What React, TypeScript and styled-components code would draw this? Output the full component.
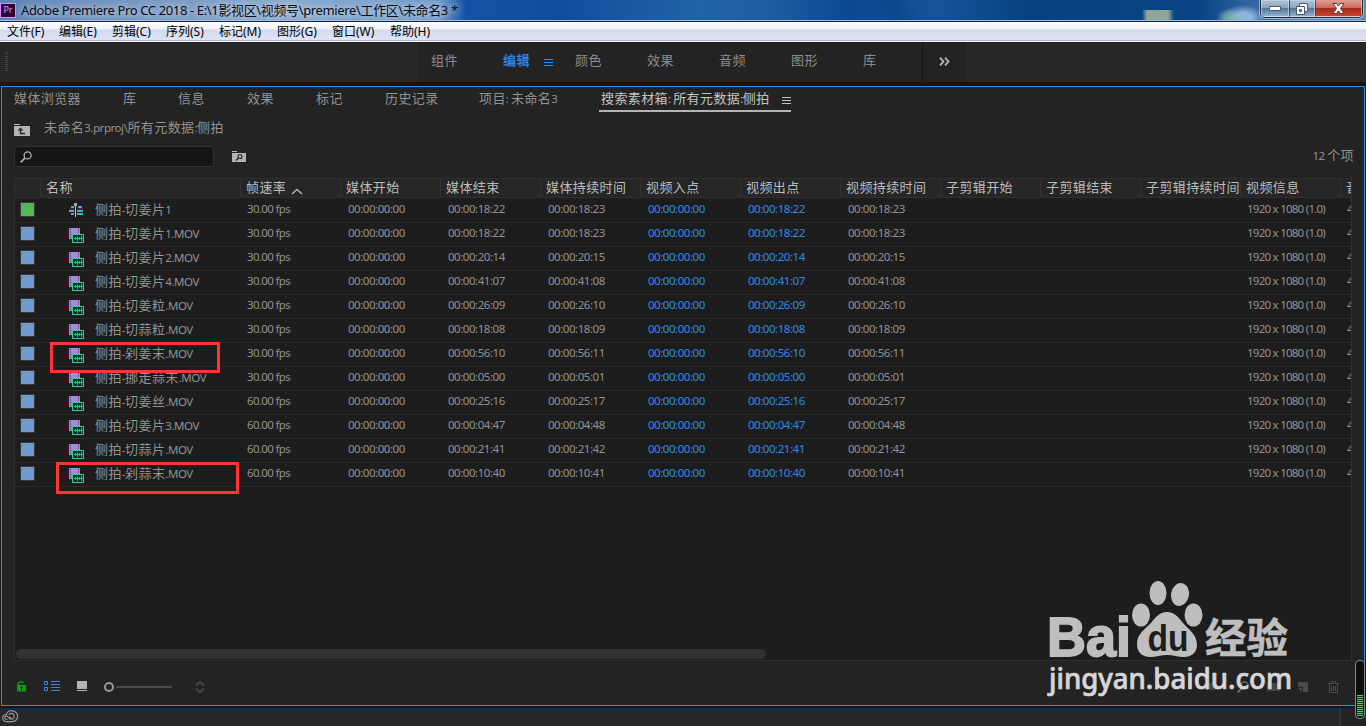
import React from "react";
import styled, { createGlobalStyle } from "styled-components";

const LATIN = `"Noto Sans", "Open Sans"`;
const CJK = `"Noto Sans CJK SC", sans-serif`;

const GlobalStyle = createGlobalStyle`
  * { box-sizing: border-box; }
  body {
    margin: 0;
    background: #161616;
    color: #929292;
    font: 13px/16px ${LATIN}, ${CJK};
    overflow: hidden;
  }
  svg { display: block; }
`;

const Frame = styled.div`
  position: relative;
  width: 1366px;
  height: 726px;
  display: flex;
  flex-direction: column;
  background: #161616;
  overflow: hidden;
`;

/* ---------- mixed script text ---------- */

const Han = styled.span`
  font: 13px/16px ${CJK};
  letter-spacing: 0.4px;
`;

const Roman = styled.span`
  font: 11.5px/16px ${LATIN}, sans-serif;
  letter-spacing: -0.45px;
`;

function Mixed({ children }: { children: string }) {
  const runs = children.match(/[\u4e00-\u9fff]+|[^\u4e00-\u9fff]+/g) ?? [];
  return (
    <>
      {runs.map((run, i) =>
        /[\u4e00-\u9fff]/.test(run) ? <Han key={i}>{run}</Han> : <Roman key={i}>{run}</Roman>
      )}
    </>
  );
}

/* ---------- window title ---------- */

const TitleBar = styled.header`
  flex: none;
  display: flex;
  height: 22px;
  overflow: hidden;
  border-bottom: 1px solid #14264a;
  box-shadow: inset 0 -1px 0 #9fbbe0;
  background:
    linear-gradient(90deg, transparent 1142px, rgba(190, 200, 165, 0.75) 1147px 1168px, transparent 1174px) 0 10px no-repeat,
    radial-gradient(ellipse 12px 10px at 1228px 18px, rgba(120, 180, 170, 0.7) 30%, transparent),
    radial-gradient(ellipse 22px 13px at 1243px 18px, rgba(160, 195, 230, 0.85) 40%, transparent),
    linear-gradient(60deg, transparent 760px, rgba(6, 60, 125, 0.35) 780px, transparent 800px),
    linear-gradient(90deg, #5b83b8 0, #7393c0 100px, #87a9cf 300px, #6f98c8 440px, #1253a3 466px, #0e4f9d 560px, #2064a8 700px, #1d5fa5 760px, #0b4a92 850px, #15539b 940px, #07417f 1030px, #0a4484 1200px, #4d7fb5 1290px, #5d89bb 1366px);
`;

const AppBadge = styled.div`
  flex: none;
  margin-top: 3px;
  width: 16px;
  height: 15px;
  border: 1px solid #d58bff;
  background: #2a0634;
  color: #dd9bff;
  font: 9px/12px ${LATIN}, sans-serif;
  text-align: center;
`;

const TitleText = styled.div`
  margin-left: 5px;
  color: #0a0a12;
  font: 13px/20px ${LATIN}, ${CJK};
  letter-spacing: -0.36px;
  white-space: nowrap;
  text-shadow: 0 0 6px rgba(255, 255, 255, 0.65), 0 0 10px rgba(255, 255, 255, 0.5);
`;

const WindowButtons = styled.div`
  display: flex;
  margin: -1px 3px 0 auto;
  height: 19px;
  border: 1px solid #1c2b40;
  border-radius: 0 0 5px 5px;
  overflow: hidden;
  box-shadow: 0 0 0 1px rgba(220, 235, 250, 0.55);
`;

const WindowButton = styled.div<{ $width: number; $close?: boolean }>`
  display: flex;
  align-items: center;
  justify-content: center;
  width: ${(p) => p.$width}px;
  border: 1px solid rgba(255, 255, 255, 0.45);
  background: ${(p) =>
    p.$close
      ? "linear-gradient(#d99a90 0, #c9695b 45%, #ab2a16 50%, #c5452f 100%)"
      : "linear-gradient(#a9bfd6 0, #8aa5c2 45%, #57779a 50%, #8fb0ca 100%)"};
  & + & { border-left-color: #33455c; }
`;

/* ---------- menu ---------- */

const MenuBar = styled.nav`
  flex: none;
  display: grid;
  grid-template-columns: 52px 53px 54px 53px 58px 55px 58px 60px;
  height: 20px;
  padding-left: 7px;
  border-bottom: 1px solid #f2f3f8;
  box-shadow: inset 0 -1px 0 #b4bace;
  background: linear-gradient(#ffffff 0, #eef1f8 7px, #d3daec 8px, #e0e5f4 19px);
  color: #000;
  font: 12px/19px ${LATIN}, ${CJK};
  white-space: nowrap;
`;

/* ---------- workspace bar ---------- */

const WorkspaceBar = styled.div`
  flex: none;
  display: flex;
  height: 40px;
  background: #272727;
`;

const Grip = styled.div`
  width: 3px;
  height: 19px;
  margin: 10px 0 0 5px;
  background: repeating-linear-gradient(#444 0 1px, transparent 1px 2px);
`;

const Workspaces = styled.div`
  display: grid;
  grid-template-columns: repeat(7, 72px);
  width: 505px;
  margin-left: 410px;
  padding: 10px 0 0 13px;
  border-right: 1px solid #151515;
  background: #232323;
`;

const Workspace = styled.div<{ $active?: boolean }>`
  display: flex;
  gap: 14px;
  color: ${(p) => (p.$active ? "#2d8ceb" : "#8c8c8c")};
  -webkit-text-stroke: ${(p) => (p.$active ? "0.3px" : "0")};
`;

const Burger = styled.span<{ $top: number }>`
  width: 9px;
  height: 7px;
  margin-top: ${(p) => p.$top}px;
  background: repeating-linear-gradient(currentColor 0 1px, transparent 1px 3px);
`;

const More = styled.div`
  padding: 15px 16px 0;
  background: #232323;
`;

/* ---------- panel ---------- */

const Panel = styled.main`
  flex: none;
  height: 620px;
  margin: 4px 1px 2px;
  display: flex;
  flex-direction: column;
  border: 1px solid #2d8ceb;
  background: #232323;
`;

const Tabs = styled.div`
  display: grid;
  grid-template-columns: 109px 55px 69px 69px 69px 94px 120px 192px;
  height: 25px;
  padding: 3px 0 0 12px;
  white-space: nowrap;
`;

const Tab = styled.div<{ $active?: boolean }>`
  display: flex;
  height: 22px;
  ${(p) => p.$active && "padding-left: 2px; color: #c4c4c4; border-bottom: 2px solid #b4b4b4; letter-spacing: 0.5px;"}
`;

const TabText = styled.div`
  flex: 1;
  white-space: pre;
`;

const PathRow = styled.div`
  display: flex;
  height: 34px;
  padding: 7px 0 0 12px;
`;

const PathIcon = styled.svg`
  margin-top: 5px;
`;

const PathText = styled.div`
  margin-left: 14px;
`;

const SearchRow = styled.div`
  display: flex;
  align-items: center;
  height: 21px;
  padding: 0 10px 0 12px;
`;

const SearchBox = styled.div`
  width: 200px;
  height: 21px;
  margin-right: 18px;
  padding: 4px 5px;
  border: 1px solid #313131;
  border-radius: 3px;
  background: #151515;
`;

const Count = styled.div`
  margin: 0 0 3px auto;
`;

/* ---------- table ---------- */

const Table = styled.section`
  display: flex;
  flex-direction: column;
  width: 1338px;
  height: 483px;
  margin: 11px 0 0 12px;
  border: 1px solid #2f2f2f;
  background: #1d1d1d;
  overflow: hidden;
`;

const columns = "26px 200px repeat(11, 100px) 11px";

const HeadRow = styled.div`
  flex: none;
  display: grid;
  grid-template-columns: ${columns};
  height: 19px;
  margin-bottom: 1px;
  border-bottom: 1px solid #2f2f2f;
  background: #262626;
`;

const HeadCell = styled.div`
  display: flex;
  min-width: 0;
  padding-left: 5px;
  border-right: 1px solid #323232;
  color: #bcbcbc;
  white-space: nowrap;
  &:last-child { border: 0; }
`;

const SortMark = styled.svg`
  margin: 9px 0 0 5px;
`;

const Row = styled.div`
  flex: none;
  display: grid;
  grid-template-columns: ${columns};
  height: 24px;
  border-bottom: 1px solid #2b2b2b;
  white-space: nowrap;
`;

const Swatch = styled.div<{ $color: string }>`
  width: 15px;
  height: 15px;
  margin: 3px 0 0 5px;
  border: 1px solid #373737;
  background: ${(p) => p.$color};
`;

const NameCell = styled.div`
  display: flex;
  padding: 2px 0 0 27px;
`;

const ClipIcon = styled.svg`
  margin: 2px 11px 0 1px;
`;

const DataCell = styled.div<{ $link?: boolean; $spacing?: number }>`
  padding: 2px 0 0 ${(p) => (p.$spacing ? 6 : 7)}px;
  color: ${(p) => (p.$link ? "#2d8ceb" : "#939393")};
  font: 11.5px/16px ${LATIN}, sans-serif;
  letter-spacing: ${(p) => p.$spacing ?? -0.46}px;
  min-width: 0;
`;

const ScrollThumb = styled.div`
  flex: none;
  width: 750px;
  height: 10px;
  margin: auto 0 1px 1px;
  border-radius: 5px;
  background: #313131;
`;

/* ---------- footer ---------- */

const Footer = styled.div`
  display: flex;
  align-items: center;
  height: 44px;
  padding: 7px 25px 0 14px;
`;

const ListGlyph = styled.svg`
  margin-left: 18px;
`;

const ThumbGlyph = styled.svg`
  margin-left: 16px;
`;

const SortGlyph = styled.svg`
  margin-left: 23px;
`;

const FooterRight = styled.div`
  display: flex;
  align-items: center;
  gap: 18px;
  margin-left: auto;
`;

const StatusBar = styled.footer`
  flex: none;
  display: flex;
  justify-content: space-between;
  height: 18px;
  background: #272727;
  padding: 2px 0 0 2px;
`;

const StatusEnd = styled.div`
  width: 27px;
  margin-top: -2px;
  border-left: 2px solid #323232;
  background: #232323;
`;

/* ---------- overlays ---------- */

const Highlight = styled.div<{ $x: number; $y: number; $w: number; $h: number }>`
  position: absolute;
  left: ${(p) => p.$x}px;
  top: ${(p) => p.$y}px;
  width: ${(p) => p.$w}px;
  height: ${(p) => p.$h}px;
  border: 3px solid #ff3434;
`;

const Watermark = styled.svg`
  position: absolute;
  left: 1040px;
  top: 575px;
`;

const Meter = styled.div`
  position: absolute;
  left: 1355px;
  top: 660px;
  width: 10px;
  height: 59px;
  padding: 34px 1px 2px;
  border: 1px solid #8a8a8a;
  border-radius: 4px;
  background: #0c0d0f;
`;

const MeterBars = styled.div`
  height: 21px;
  background: repeating-linear-gradient(#45d56b 0 1px, #12331b 1px 2px);
`;

/* ---------- icons ---------- */

const SequenceIcon = () => (
  <ClipIcon width="15" height="15" viewBox="0 0 15 15">
    <path d="M2 4h3M0 8h5M9 4h4M8 8h6" stroke="#6f97d0" strokeWidth="2" />
    <path d="M1 6h4M9 6h5" stroke="#3a4b63" />
    <path d="M2 11h3M8 11h6" stroke="#27c98f" strokeWidth="2" />
    <path d="M6.500 1v13" stroke="#c5c5c5" />
    <path d="M5 0h3v3H5z" fill="#aaa" />
  </ClipIcon>
);

const MovieIcon = () => (
  <ClipIcon width="15" height="16" viewBox="0 0 15 16">
    <path d="M0 1h11v11H0z" fill="#a78be0" />
    <path d="M1.500 2v10M9.500 2v5" stroke="#241d33" strokeDasharray="1 1.500" />
    <path d="M3.500 7.500h11v8h-11z" fill="#122b22" stroke="#29d998" />
    <path d="M5 11.500h9M6.500 10v3M8.500 9v5M10.500 10v3M12.500 9v5" stroke="#29d998" strokeWidth="0.8" />
  </ClipIcon>
);

const FolderUpIcon = () => (
  <PathIcon width="16" height="12" viewBox="0 0 16 12">
    <path d="M0 0h6v1H0zM0 2h16v10H0z" fill="#b4b4b4" />
    <path d="M11 9.500H6.500V5M4.500 6.500l2-2 2 2" fill="none" stroke="#232323" strokeWidth="1.300" />
  </PathIcon>
);

const FolderSearchIcon = () => (
  <svg width="14" height="12" viewBox="0 0 14 12">
    <path d="M0 0h5v1H0zM0 2h14v9H0z" fill="#b4b4b4" />
    <circle cx="8" cy="5.500" r="2" fill="none" stroke="#232323" strokeWidth="1.200" />
    <path d="M6.500 7L4 9.500" stroke="#232323" strokeWidth="1.200" />
  </svg>
);

const Magnifier = ({ color = "#b4b4b4" }: { color?: string }) => (
  <svg width="12" height="12" viewBox="0 0 12 12">
    <circle cx="7.600" cy="4.400" r="3.500" fill="none" stroke={color} strokeWidth="1.300" />
    <path d="M5 7L0.700 11.300" stroke={color} strokeWidth="1.700" />
  </svg>
);

const LockIcon = () => (
  <svg width="10" height="11" viewBox="0 0 10 11">
    <path d="M2 4V2.700L3.700 1h2.600L7.500 2" fill="none" stroke="#139c13" strokeWidth="1.400" />
    <path d="M1 4h9v6.500H1z" fill="#139c13" />
    <path d="M5.500 5.500v4M4.500 6.500h2" stroke="#163016" strokeWidth="1.200" />
  </svg>
);

const ListIcon = () => (
  <ListGlyph width="17" height="11" viewBox="0 0 17 11">
    <path d="M.5.500h3v3h-3zM.5 6.500h3v3h-3zM7 .5h9M7 3.500h9M7 6.500h9M7 9.500h9" fill="none" stroke="#2d8ceb" />
  </ListGlyph>
);

const ThumbIcon = () => (
  <ThumbGlyph width="11" height="11" viewBox="0 0 11 11">
    <path d="M0 0h10v8H0zM0 9h10v1H0z" fill="#b4b4b4" />
  </ThumbGlyph>
);

const ZoomSlider = () => (
  <ThumbGlyph width="68" height="12" viewBox="0 0 68 12">
    <path d="M12 6h56" stroke="#4b4b4b" strokeWidth="2" />
    <circle cx="5" cy="6" r="4" fill="none" stroke="#999" strokeWidth="2" />
  </ThumbGlyph>
);

const SortIcon = () => (
  <SortGlyph width="10" height="12" viewBox="0 0 10 12">
    <path d="M.8 4.500L5 .8l4.200 3.700M.8 7.500L5 11.200l4.200-3.700" fill="none" stroke="#555" strokeWidth="1.300" />
  </SortGlyph>
);

const CloudIcon = () => (
  <svg width="17" height="13" viewBox="0 0 17 13">
    <path
      d="M4.300 11.700A3.700 3.700 0 0 1 4.500 4.300 5 5 0 0 1 10.400.8a5.400 5.400 0 0 1-.4 10.900z"
      fill="none" stroke="#9a9a9a" strokeWidth="1.200"
    />
    <path
      d="M8.500 9.600L5.800 6.700a1.700 1.700 0 1 0-1.300 2.800h1M6.700 4.700a3 3 0 1 1 3.300 4.600L7.500 6.600"
      fill="none" stroke="#9a9a9a" strokeWidth="1.100"
    />
  </svg>
);

const TrashIcon = () => (
  <svg width="11" height="12" viewBox="0 0 11 12">
    <path d="M0 2.500h11M3.500 2.500v-2h4v2M1.500 3v8.500h8V3M3.500 5v5M5.500 5v5M7.500 5v5" fill="none" stroke="#4b4b4b" />
  </svg>
);

/* ---------- data ---------- */

const menus = ["文件(F)", "编辑(E)", "剪辑(C)", "序列(S)", "标记(M)", "图形(G)", "窗口(W)", "帮助(H)"];
const workspaces = ["组件", "编辑", "颜色", "效果", "音频", "图形", "库"];
const tabs = ["媒体浏览器", "库", "信息", "效果", "标记", "历史记录", "项目: 未命名3"];
const heads = [
  "", "名称", "帧速率", "媒体开始", "媒体结束", "媒体持续时间", "视频入点", "视频出点",
  "视频持续时间", "子剪辑开始", "子剪辑结束", "子剪辑持续时间", "视频信息", "音",
];
const ZERO = "00:00:00:00";
const clips: [string, string, string, string][] = [
  ["侧拍-切姜片1", "30.00", "00:00:18:22", "00:00:18:23"],
  ["侧拍-切姜片1.MOV", "30.00", "00:00:18:22", "00:00:18:23"],
  ["侧拍-切姜片2.MOV", "30.00", "00:00:20:14", "00:00:20:15"],
  ["侧拍-切姜片4.MOV", "30.00", "00:00:41:07", "00:00:41:08"],
  ["侧拍-切姜粒.MOV", "30.00", "00:00:26:09", "00:00:26:10"],
  ["侧拍-切蒜粒.MOV", "30.00", "00:00:18:08", "00:00:18:09"],
  ["侧拍-剁姜末.MOV", "30.00", "00:00:56:10", "00:00:56:11"],
  ["侧拍-挪走蒜末.MOV", "30.00", "00:00:05:00", "00:00:05:01"],
  ["侧拍-切姜丝.MOV", "60.00", "00:00:25:16", "00:00:25:17"],
  ["侧拍-切姜片3.MOV", "60.00", "00:00:04:47", "00:00:04:48"],
  ["侧拍-切蒜片.MOV", "60.00", "00:00:21:41", "00:00:21:42"],
  ["侧拍-剁蒜末.MOV", "60.00", "00:00:10:40", "00:00:10:41"],
];

export default function App() {
  return (
    <Frame>
      <GlobalStyle />
      <TitleBar>
        <AppBadge>Pr</AppBadge>
        <TitleText>Adobe Premiere Pro CC 2018 - E:\1影视区\视频号\premiere\工作区\未命名3 *</TitleText>
        <WindowButtons>
          <WindowButton $width={28}>
            <svg width="12" height="5" viewBox="0 0 12 5"><path d="M.5.500h11v4H.5z" fill="#fff" stroke="#4b5a6e" /></svg>
          </WindowButton>
          <WindowButton $width={26}>
            <svg width="12" height="12" viewBox="0 0 12 12">
              <path d="M3.500.5h8v8h-8z" fill="#fff" stroke="#4b5a6e" />
              <path d="M.5 3.500h8v8h-8z" fill="#fff" stroke="#4b5a6e" />
              <path d="M3.500 6.500h2v2h-2z" fill="#7b92ad" stroke="#4b5a6e" />
            </svg>
          </WindowButton>
          <WindowButton $width={47} $close>
            <svg width="13" height="11" viewBox="0 0 13 11">
              <path d="M1 .5h3.500l2 2.500 2-2.500H12L8.500 5.500 12 10.500H8.500l-2-2.700-2 2.700H1l3.500-5z" fill="#fff" stroke="#553a48" />
            </svg>
          </WindowButton>
        </WindowButtons>
      </TitleBar>
      <MenuBar>{menus.map((m) => <span key={m}>{m}</span>)}</MenuBar>
      <WorkspaceBar>
        <Grip />
        <Workspaces>
          {workspaces.map((w) => (
            <Workspace key={w} $active={w === "编辑"}>
              <Mixed>{w}</Mixed>
              {w === "编辑" && <Burger $top={7} />}
            </Workspace>
          ))}
        </Workspaces>
        <More>
          <svg width="11" height="9" viewBox="0 0 11 9">
            <path d="M1 .7l3.500 3.800L1 8.300M6 .7l3.500 3.800L6 8.300" fill="none" stroke="#b4b4b4" strokeWidth="1.900" />
          </svg>
        </More>
      </WorkspaceBar>
      <Panel>
        <Tabs>
          {tabs.map((t) => <Tab key={t}><TabText><Mixed>{t}</Mixed></TabText></Tab>)}
          <Tab $active>
            <TabText><Mixed>搜索素材箱: 所有元数据:侧拍</Mixed></TabText>
            <Burger $top={7} />
          </Tab>
        </Tabs>
        <PathRow>
          <FolderUpIcon />
          <PathText><Mixed>未命名3.prproj\所有元数据:侧拍</Mixed></PathText>
        </PathRow>
        <SearchRow>
          <SearchBox><Magnifier /></SearchBox>
          <FolderSearchIcon />
          <Count><Mixed>12 个项</Mixed></Count>
        </SearchRow>
        <Table>
          <HeadRow>
            {heads.map((h, i) => (
              <HeadCell key={i}>
                <Han>{h}</Han>
                {h === "帧速率" && (
                  <SortMark width="12" height="7" viewBox="0 0 12 7">
                    <path d="M1 6l5-4.500L11 6" fill="none" stroke="#b4b4b4" strokeWidth="1.500" />
                  </SortMark>
                )}
              </HeadCell>
            ))}
          </HeadRow>
          {clips.map(([name, fps, end, duration], i) => (
            <Row key={name}>
              <Swatch $color={i === 0 ? "#52b755" : "#7099cc"} />
              <NameCell>
                {i === 0 ? <SequenceIcon /> : <MovieIcon />}
                <div><Mixed>{name}</Mixed></div>
              </NameCell>
              <DataCell $spacing={-0.65}>{fps} fps</DataCell>
              <DataCell>{ZERO}</DataCell>
              <DataCell>{end}</DataCell>
              <DataCell>{duration}</DataCell>
              <DataCell $link>{ZERO}</DataCell>
              <DataCell $link>{end}</DataCell>
              <DataCell>{duration}</DataCell>
              <DataCell />
              <DataCell />
              <DataCell />
              <DataCell $spacing={-0.75}>1920 x 1080 (1.0)</DataCell>
              <DataCell $spacing={-0.65}>4</DataCell>
            </Row>
          ))}
          <ScrollThumb />
        </Table>
        <Footer>
          <LockIcon />
          <ListIcon />
          <ThumbIcon />
          <ZoomSlider />
          <SortIcon />
          <FooterRight>
            <svg width="15" height="7" viewBox="0 0 15 7"><path d="M0 1h4v6H0zM5 0h5v7H5zM11 0h1v7h-1zM13 2h1v5h-1z" fill="#444" /></svg>
            <Magnifier color="#777" />
            <svg width="13" height="9" viewBox="0 0 13 9"><path d="M0 0h5v1h8v8H0z" fill="#444" /></svg>
            <svg width="12" height="10" viewBox="0 0 12 10"><path d="M0 0h10v10H5V5H0zM0 6h4v4z" fill="#4b4b4b" /></svg>
            <TrashIcon />
          </FooterRight>
        </Footer>
      </Panel>
      <StatusBar>
        <CloudIcon />
        <StatusEnd />
      </StatusBar>

      <Highlight $x={50} $y={342} $w={170} $h={31} />
      <Highlight $x={56} $y={462} $w={183} $h={32} />

      <Watermark width="260" height="130" viewBox="0 0 260 130">
        <g fill="#bebebe">
          <text x="7" y="80.500" textLength="84" lengthAdjust="spacingAndGlyphs" fontFamily="Liberation Sans" fontWeight="700" fontSize="55" stroke="#bebebe" strokeWidth="1.800">Bai</text>
          <ellipse cx="101" cy="40" rx="9" ry="11.500" />
          <ellipse cx="118" cy="18" rx="8.500" ry="12" />
          <ellipse cx="140" cy="19.500" rx="9" ry="11.500" transform="rotate(10 140 19.500)" />
          <ellipse cx="153.500" cy="40" rx="9" ry="11.500" />
          <path d="M127 37c8 0 12 6 16 11 5 6 14 11 14 22 0 8-6 12-13 12-6 0-11-2-17-2s-11 2-17 2c-7 0-13-4-13-13 0-10 8-15 14-21 4-5 8-11 16-11z" />
          <text x="165" y="78" textLength="83" lengthAdjust="spacingAndGlyphs" fontFamily="Noto Sans CJK SC" fontWeight="700" fontSize="41" stroke="#bebebe" strokeWidth="0.6">经验</text>
        </g>
        <text x="107.500" y="76" textLength="41" lengthAdjust="spacingAndGlyphs" fontFamily="Liberation Sans" fontWeight="700" fontSize="36" fill="#1d1d1d">du</text>
        <text x="9" y="114" textLength="243" lengthAdjust="spacingAndGlyphs" fontFamily="Noto Sans" fontWeight="500" fontSize="28" fill="#d6d6d6" stroke="#d6d6d6" strokeWidth="0.7">jingyan.baidu.com</text>
      </Watermark>

      <Meter><MeterBars /></Meter>
    </Frame>
  );
}
